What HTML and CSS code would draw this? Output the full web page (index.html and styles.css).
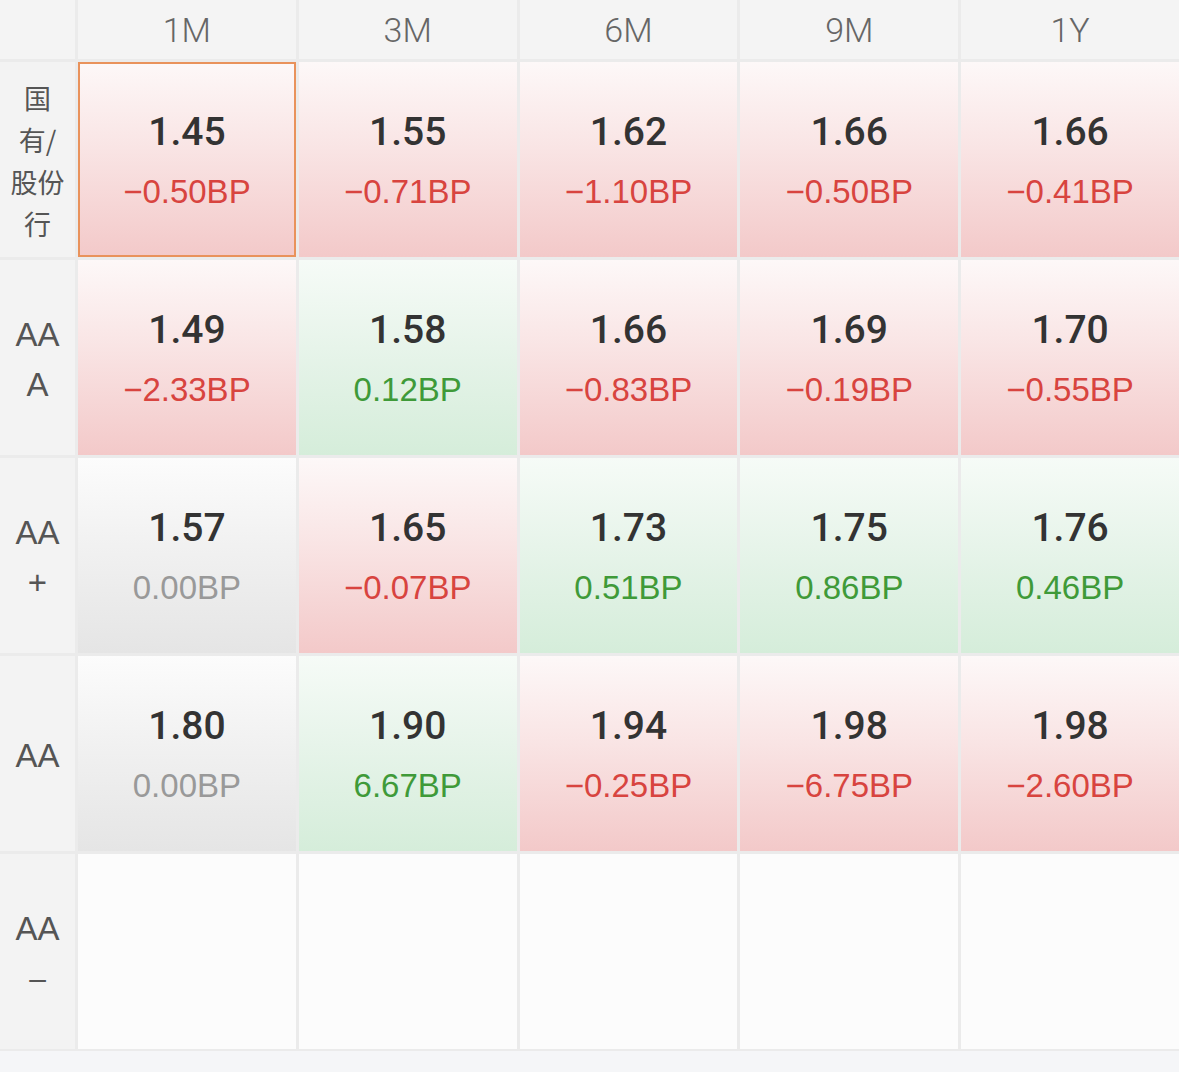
FILE: index.html
```html
<!DOCTYPE html>
<html lang="zh">
<head>
<meta charset="utf-8">
<title>存单收益率矩阵</title>
<link rel="stylesheet" href="styles.css">
</head>
<body>
<div class="grid">
  <div class="hd corner"></div>
  <div class="hd">1M</div>
  <div class="hd">3M</div>
  <div class="hd">6M</div>
  <div class="hd">9M</div>
  <div class="hd">1Y</div>

  <div class="lbl cn"><span>国</span><span>有/</span><span>股份</span><span>行</span></div>
  <div class="cell red sel"><span class="val">1.45</span><span class="chg dn">−0.50BP</span></div>
  <div class="cell red"><span class="val">1.55</span><span class="chg dn">−0.71BP</span></div>
  <div class="cell red"><span class="val">1.62</span><span class="chg dn">−1.10BP</span></div>
  <div class="cell red"><span class="val">1.66</span><span class="chg dn">−0.50BP</span></div>
  <div class="cell red"><span class="val">1.66</span><span class="chg dn">−0.41BP</span></div>

  <div class="lbl en"><span>AA</span><span>A</span></div>
  <div class="cell red"><span class="val">1.49</span><span class="chg dn">−2.33BP</span></div>
  <div class="cell green"><span class="val">1.58</span><span class="chg up">0.12BP</span></div>
  <div class="cell red"><span class="val">1.66</span><span class="chg dn">−0.83BP</span></div>
  <div class="cell red"><span class="val">1.69</span><span class="chg dn">−0.19BP</span></div>
  <div class="cell red"><span class="val">1.70</span><span class="chg dn">−0.55BP</span></div>

  <div class="lbl en"><span>AA</span><span>+</span></div>
  <div class="cell gray"><span class="val">1.57</span><span class="chg flat">0.00BP</span></div>
  <div class="cell red"><span class="val">1.65</span><span class="chg dn">−0.07BP</span></div>
  <div class="cell green"><span class="val">1.73</span><span class="chg up">0.51BP</span></div>
  <div class="cell green"><span class="val">1.75</span><span class="chg up">0.86BP</span></div>
  <div class="cell green"><span class="val">1.76</span><span class="chg up">0.46BP</span></div>

  <div class="lbl en"><span>AA</span></div>
  <div class="cell gray"><span class="val">1.80</span><span class="chg flat">0.00BP</span></div>
  <div class="cell green"><span class="val">1.90</span><span class="chg up">6.67BP</span></div>
  <div class="cell red"><span class="val">1.94</span><span class="chg dn">−0.25BP</span></div>
  <div class="cell red"><span class="val">1.98</span><span class="chg dn">−6.75BP</span></div>
  <div class="cell red"><span class="val">1.98</span><span class="chg dn">−2.60BP</span></div>

  <div class="lbl en"><span>AA</span><span class="dash">–</span></div>
  <div class="cell empty"></div>
  <div class="cell empty"></div>
  <div class="cell empty"></div>
  <div class="cell empty"></div>
  <div class="cell empty"></div>
</div>
</body>
</html>
```

FILE: styles.css
```css
html, body {
  margin: 0;
  padding: 0;
}
body {
  width: 1179px;
  height: 1072px;
  background: #f5f6f8;
  font-family: "Liberation Sans", "Noto Sans CJK SC", sans-serif;
  overflow: hidden;
}
.grid {
  display: grid;
  grid-template-columns: 75px repeat(5, 1fr);
  grid-template-rows: 59px repeat(5, 195px);
  gap: 3px;
  background: #ebebeb;
  padding-bottom: 2px;
}
.hd {
  background: #f4f4f4;
  display: flex;
  align-items: center;
  justify-content: center;
  font-family: "Roboto", "Liberation Sans", sans-serif;
  font-weight: 300;
  font-size: 34px;
  color: #666;
}
.lbl {
  background: #f3f3f3;
  display: flex;
  flex-direction: column;
  align-items: center;
  justify-content: center;
  color: #555;
}
.lbl span {
  display: block;
}
.lbl.cn {
  font-family: "Noto Sans CJK SC", sans-serif;
  font-size: 27px;
  line-height: 42px;
  padding-top: 2px;
}
.lbl.en {
  font-family: "Liberation Sans", sans-serif;
  font-size: 33px;
  line-height: 50px;
  padding-top: 4px;
}
.lbl .dash {
  font-size: 30px;
}
.cell {
  display: flex;
  flex-direction: column;
  align-items: center;
  justify-content: center;
  box-sizing: border-box;
  padding-top: 4px;
}
.cell.red {
  background: linear-gradient(to bottom, #fdf8f8 0%, #f9e4e4 45%, #f3c9c9 100%);
}
.cell.green {
  background: linear-gradient(to bottom, #f6fbf7 0%, #e7f4ea 45%, #d5edda 100%);
}
.cell.gray {
  background: linear-gradient(to bottom, #fcfcfc 0%, #f1f1f1 45%, #e5e5e5 100%);
}
.cell.empty {
  background: #fcfcfc;
}
.cell.sel {
  box-shadow: inset 0 0 0 2px #e9925b;
}
.val {
  font-family: "Roboto", "Liberation Sans", sans-serif;
  font-weight: 500;
  font-size: 39px;
  line-height: 60px;
  color: #333;
}
.chg {
  font-family: "Liberation Sans", sans-serif;
  font-weight: 400;
  font-size: 33px;
  line-height: 60px;
}
.chg.dn { color: #d8443f; }
.chg.up { color: #3f9a39; }
.chg.flat { color: #999; }
```
